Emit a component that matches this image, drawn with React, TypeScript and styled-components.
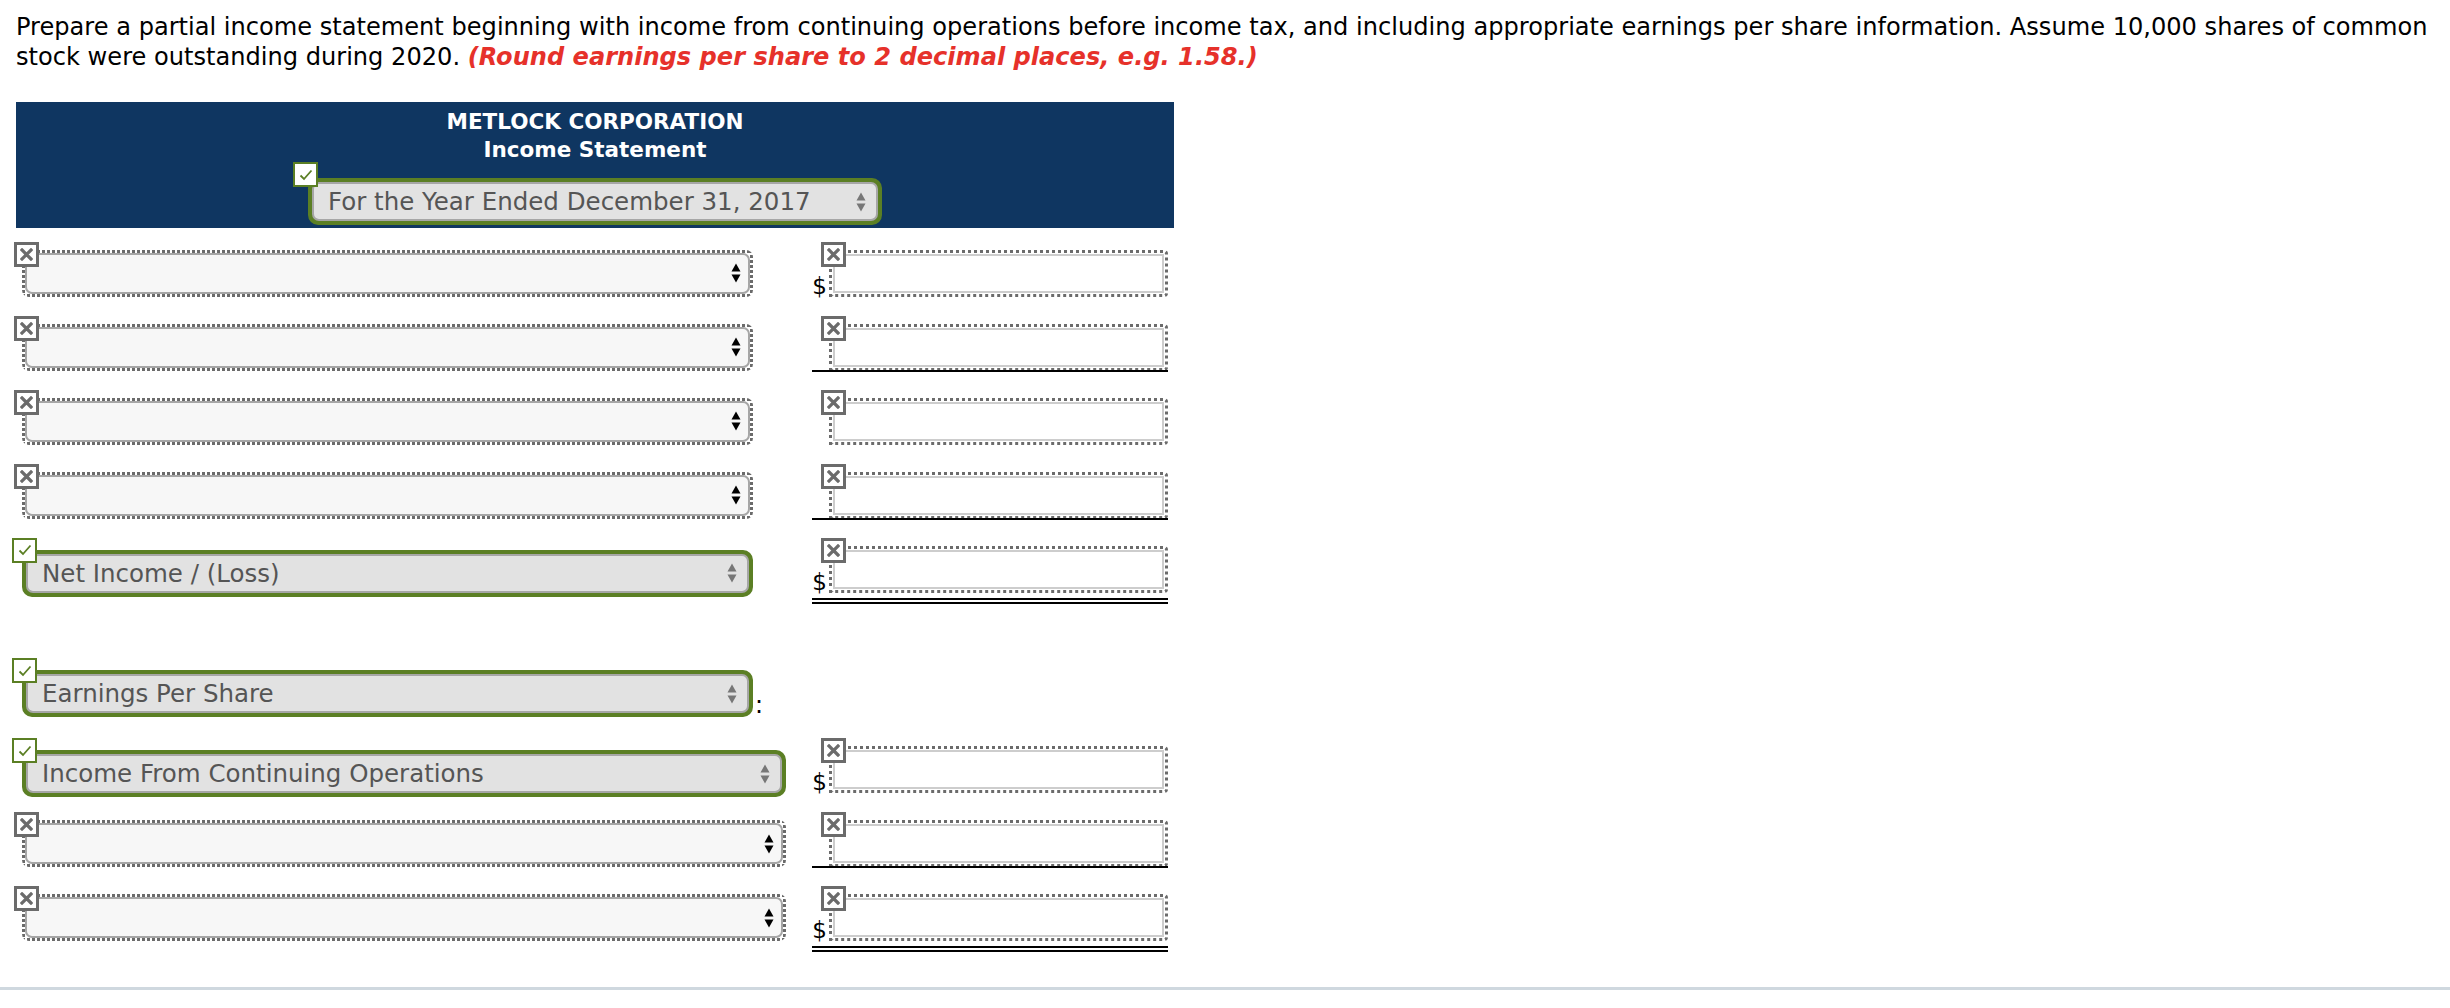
import styled, { createGlobalStyle } from 'styled-components'

const GlobalStyle = createGlobalStyle`
  html, body {
    margin: 0;
    padding: 0;
    background: #fff;
  }
  body {
    font-family: "DejaVu Sans", Verdana, sans-serif;
    color: #000;
  }
`

const Page = styled.div`
  width: 2450px;
  height: 1008px;
  box-sizing: border-box;
  padding-top: 12px;
  overflow: hidden;
`

const Prompt = styled.p`
  margin: 0 16px;
  font-size: 24.1px;
  line-height: 30px;
  white-space: nowrap;
`

const Hint = styled.em`
  color: #e6312a;
  font-weight: bold;
`

const Sheet = styled.div`
  width: 1158px;
  margin: 30px 0 0 16px;
`

const Banner = styled.header`
  background: #0f3661;
  color: #fff;
  padding: 6px 0 3px;
  display: flex;
  flex-direction: column;
  align-items: center;
`

const Title = styled.div`
  font-size: 21.5px;
  font-weight: bold;
  line-height: 28px;
  text-align: center;
`

const GreenFrame = styled.div<{ $w: number; $top: number }>`
  position: relative;
  width: ${(p) => p.$w}px;
  height: 47px;
  margin-top: ${(p) => p.$top}px;
  box-sizing: border-box;
  border: 4px solid #5b7f24;
  border-radius: 10px;
  background: #5b7f24;
  flex-shrink: 0;
`

const dots = (dir: string) =>
  `repeating-linear-gradient(${dir}, #6b6b6b 0 3px, transparent 3px 5px)`

const DottedFrame = styled.div<{ $w: number }>`
  position: relative;
  width: ${(p) => p.$w}px;
  height: 47px;
  margin-top: 8px;
  box-sizing: border-box;
  padding: 3px;
  border-radius: 7px;
  flex-shrink: 0;
  background:
    ${dots('90deg')} top left / 100% 3px no-repeat,
    ${dots('90deg')} bottom left / 100% 3px no-repeat,
    ${dots('180deg')} top left / 3px 100% no-repeat,
    ${dots('180deg')} top right / 3px 100% no-repeat;
`

const Choice = styled.div<{ $filled?: boolean }>`
  height: 100%;
  box-sizing: border-box;
  border: 2px solid #a6a6a6;
  border-radius: 7px;
  background: ${(p) => (p.$filled ? '#e2e2e2' : '#f7f7f7')};
  display: flex;
  align-items: center;
  justify-content: space-between;
  padding: 0 ${(p) => (p.$filled ? 10 : 7)}px 0 14px;
  font-size: 24.5px;
  color: #555;
`

const Badge = styled.span<{ $ok?: boolean; $x: number; $y: number }>`
  position: absolute;
  left: ${(p) => p.$x}px;
  top: ${(p) => p.$y}px;
  z-index: 2;
  width: 25px;
  height: 25px;
  box-sizing: border-box;
  border: ${(p) => (p.$ok ? '2px solid #5b7f24' : '3px solid #6b6b6b')};
  background: #fff;
  display: grid;
  place-items: center;
`

const Rows = styled.div`
  display: flex;
  flex-direction: column;
  gap: 19px;
  margin-top: 13.5px;
`

const Row = styled.div<{ $extra?: number }>`
  display: grid;
  grid-template-columns: 813px 339px;
  height: 55px;
  margin-top: ${(p) => p.$extra ?? 0}px;
`

const LabelCell = styled.div`
  display: flex;
  align-items: flex-start;
  padding-left: 6px;
`

const Colon = styled.span`
  font-size: 24px;
  line-height: 24px;
  margin: 35px 0 0 2px;
`

const AmountFrame = styled.div<{ $rule?: 'single' | 'double' }>`
  position: relative;
  height: 47px;
  margin-top: 8px;
  box-sizing: border-box;
  border: 3px dotted #6b6b6b;
  border-radius: 0 4px 4px 0;
  padding: 1px;

  &::after {
    content: '';
    display: ${(p) => (p.$rule ? 'block' : 'none')};
    position: absolute;
    left: -20px;
    right: -3px;
    box-sizing: border-box;
    bottom: ${(p) => (p.$rule === 'double' ? -14 : -4)}px;
    height: ${(p) => (p.$rule === 'double' ? 6 : 2)}px;
    ${(p) =>
      p.$rule === 'double'
        ? 'border-top: 2px solid #000; border-bottom: 2px solid #000;'
        : 'background: #000;'}
  }
`

const Field = styled.div`
  height: 100%;
  box-sizing: border-box;
  border: 2px solid #cdcdcd;
  background: #fff;
`

const Dollar = styled.span`
  position: absolute;
  right: calc(100% + 5px);
  bottom: -4px;
  font-size: 23px;
  line-height: 23px;
`

const Rule = styled.hr`
  margin: 46px 0 0;
  border: 0;
  height: 3px;
  background: #cfd8df;
`

const Spinner = ({ color }: { color: string }) => (
  <svg width="10" height="22" viewBox="0 0 10 22">
    <path d="M5 1.5 L9.5 9.5 H0.5Z M5 20.5 L9.5 12.5 H0.5Z" fill={color} />
  </svg>
)

const Cross = () => (
  <svg width="13" height="13" viewBox="0 0 13 13">
    <path d="M2 2 L11 11 M11 2 L2 11" stroke="#6b6b6b" strokeWidth="3.2" strokeLinecap="square" />
  </svg>
)

const Tick = () => (
  <svg width="16" height="16" viewBox="0 0 16 16">
    <path d="M2.5 8.5 L6 12 L13.5 3.5" stroke="#5b7f24" strokeWidth="1.8" fill="none" />
  </svg>
)

type Line = {
  label?: string
  width: number
  amount?: boolean
  dollar?: boolean
  rule?: 'single' | 'double'
  colon?: boolean
  extra?: number
}

const lines: Line[] = [
  { width: 731, amount: true, dollar: true },
  { width: 731, amount: true, rule: 'single' },
  { width: 731, amount: true },
  { width: 731, amount: true, rule: 'single' },
  { label: 'Net Income / (Loss)', width: 731, amount: true, dollar: true, rule: 'double' },
  { label: 'Earnings Per Share', width: 731, colon: true, extra: 46.5 },
  { label: 'Income From Continuing Operations', width: 764, amount: true, dollar: true, extra: 6 },
  { width: 764, amount: true, rule: 'single' },
  { width: 764, amount: true, dollar: true, rule: 'double' },
]

const LineRow = ({ line }: { line: Line }) => (
  <Row $extra={line.extra}>
    <LabelCell>
      {line.label ? (
        <GreenFrame $w={line.width} $top={12}>
          <Badge $ok $x={-14} $y={-16}>
            <Tick />
          </Badge>
          <Choice $filled>
            {line.label}
            <Spinner color="#777" />
          </Choice>
        </GreenFrame>
      ) : (
        <DottedFrame $w={line.width}>
          <Badge $x={-8} $y={-8}>
            <Cross />
          </Badge>
          <Choice>
            <span />
            <Spinner color="#000" />
          </Choice>
        </DottedFrame>
      )}
      {line.colon && <Colon>:</Colon>}
    </LabelCell>
    {line.amount ? (
      <AmountFrame $rule={line.rule}>
        <Badge $x={-11} $y={-11}>
          <Cross />
        </Badge>
        {line.dollar && <Dollar>$</Dollar>}
        <Field />
      </AmountFrame>
    ) : (
      <div />
    )}
  </Row>
)

const App = () => {
  return (
    <Page>
      <GlobalStyle />
      <Prompt>
        Prepare a partial income statement beginning with income from continuing operations before income tax, and
        including appropriate earnings per share information. Assume 10,000 shares of common
        <br />
        stock were outstanding during 2020. <Hint>(Round earnings per share to 2 decimal places, e.g. 1.58.)</Hint>
      </Prompt>
      <Sheet>
        <Banner>
          <Title>METLOCK CORPORATION</Title>
          <Title>Income Statement</Title>
          <GreenFrame $w={574} $top={14}>
            <Badge $ok $x={-19} $y={-20}>
              <Tick />
            </Badge>
            <Choice $filled>
              For the Year Ended December 31, 2017
              <Spinner color="#777" />
            </Choice>
          </GreenFrame>
        </Banner>
        <Rows>
          {lines.map((line, i) => (
            <LineRow key={i} line={line} />
          ))}
        </Rows>
      </Sheet>
      <Rule />
    </Page>
  )
}

export default App
